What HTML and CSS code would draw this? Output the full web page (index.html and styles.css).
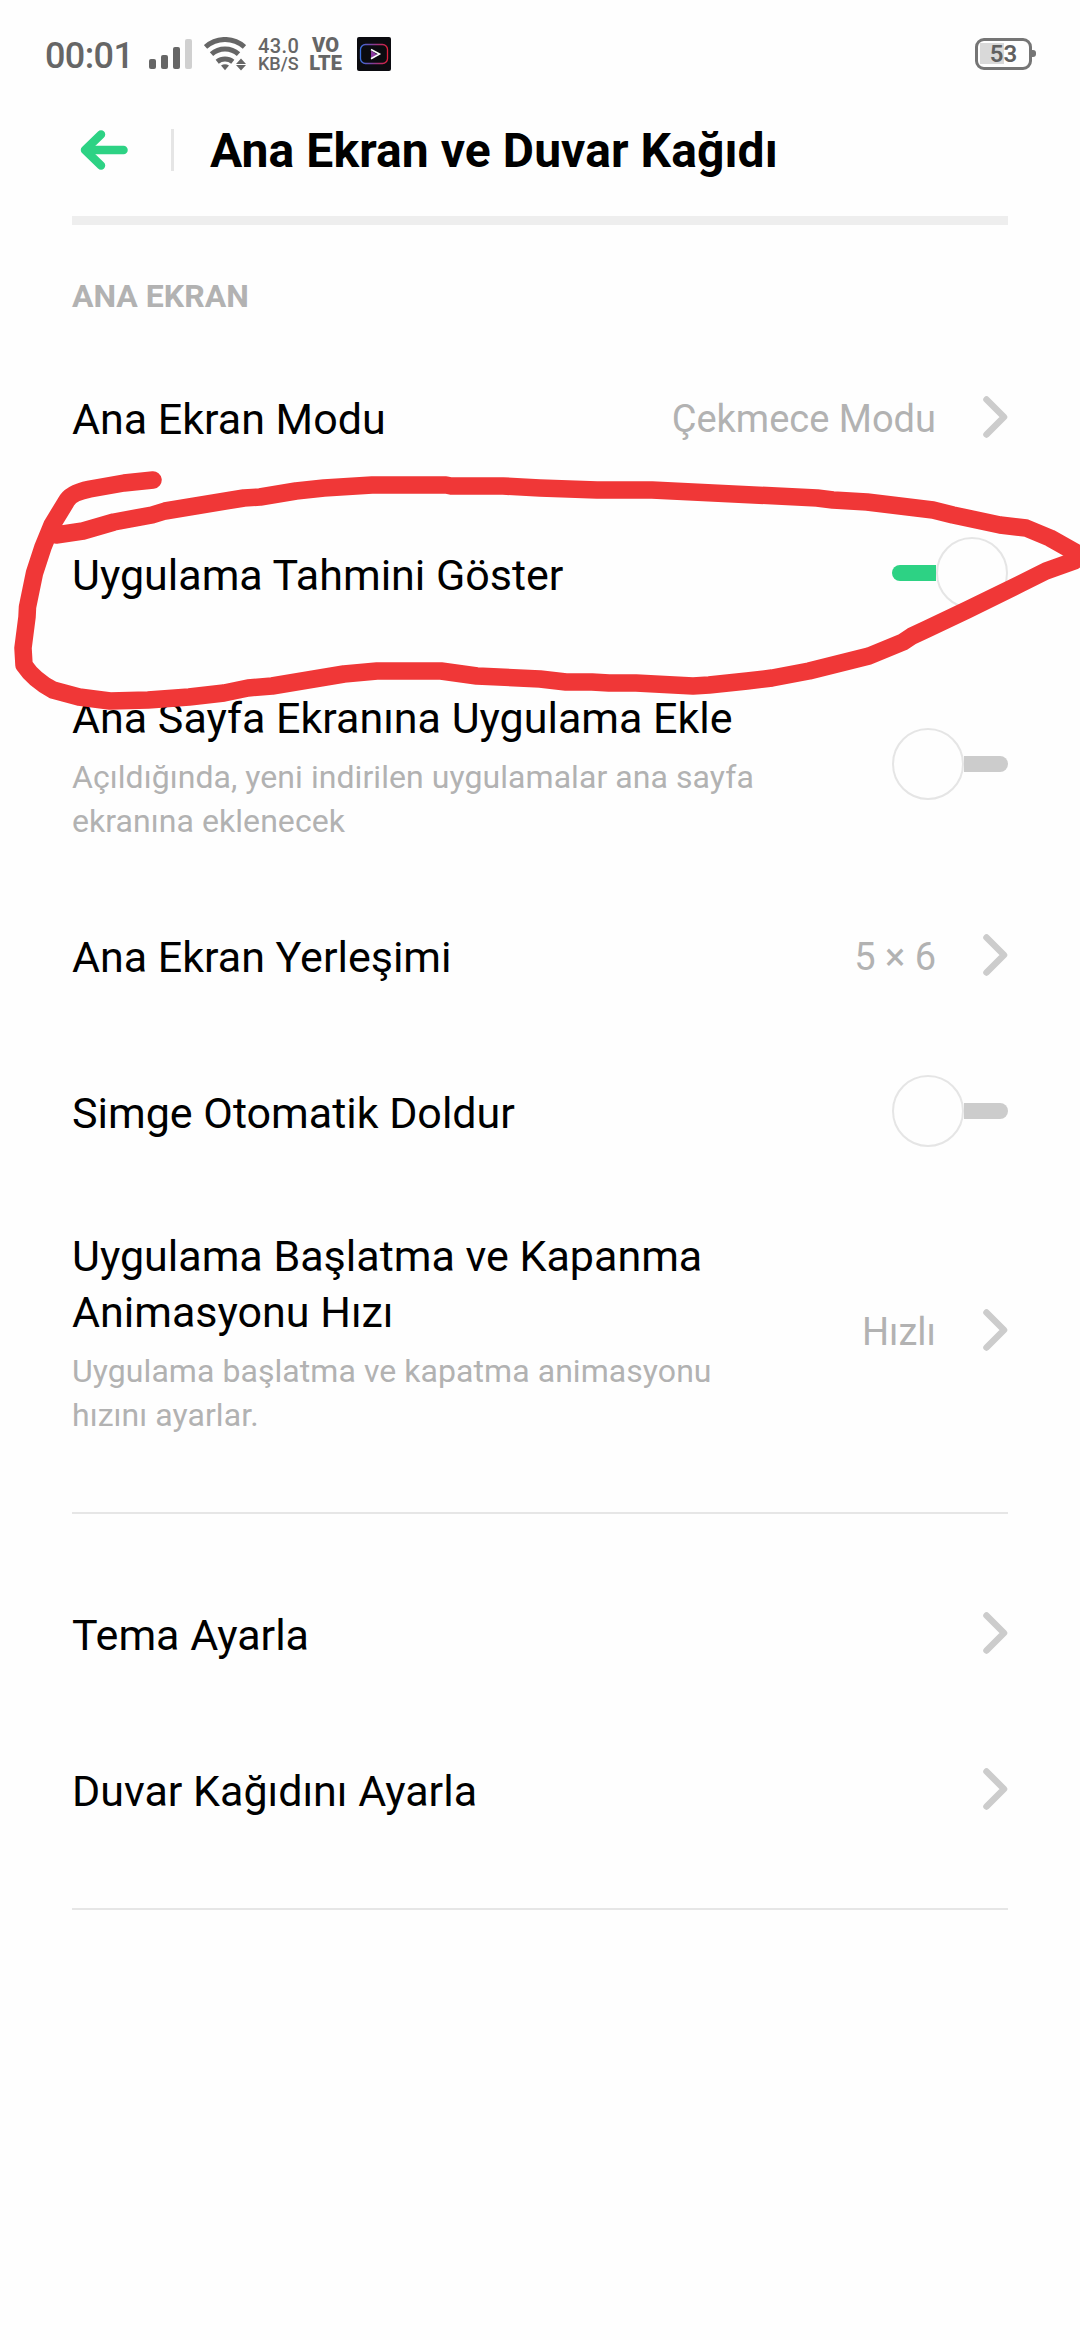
FILE: index.html
```html
<!DOCTYPE html>
<html lang="tr">
<head>
<meta charset="utf-8">
<title>Ana Ekran ve Duvar Kağıdı</title>
<link rel="stylesheet" href="styles.css">
</head>
<body>
<div class="screen">
  <div class="status">
    <span class="clock">00:01</span>
    <svg class="signal" width="43" height="30" viewBox="0 0 43 30"><g fill="#666"><rect x="0" y="20" width="7" height="10" rx="2"/><rect x="12" y="16" width="7" height="14" rx="2"/><rect x="24" y="8" width="7" height="22" rx="2"/></g><rect x="36" y="0" width="7" height="30" rx="2" fill="#d0d0d0"/></svg>
    <svg class="wifi" width="42" height="34" viewBox="0 0 42 34"><g fill="none" stroke="#666" stroke-width="5"><path d="M1.500 10a29 29 0 0 1 39 0"/><path d="M7.500 17.200a20 20 0 0 1 27 0"/><path d="M13.200 24.800a12.500 12.500 0 0 1 15.600 0"/></g><path fill="#666" d="M17 28.500q4-2.400 8 0l-4 4.800zM37 21.500l5 5.500h-10zM37 33.500l5-5.500h-10z"/></svg>
    <span class="speed"><span class="rate">43.0</span><span class="unit">KB/S</span></span>
    <span class="volte"><span>VO</span><span>LTE</span></span>
    <svg class="app" width="34" height="34" viewBox="0 0 34 34"><defs><linearGradient id="ring"><stop offset="0" stop-color="#3a6fe0"/><stop offset=".5" stop-color="#8a3a90"/><stop offset="1" stop-color="#e0203c"/></linearGradient></defs><rect width="34" height="34" rx="2" fill="#0b0b10"/><rect x="3.500" y="7.500" width="27" height="19" rx="5" fill="none" stroke="url(#ring)" stroke-width="1.300"/><path d="M14 13.500v8l6-4z" fill="#8a3aa0"/><path d="M14 12.500l8.500 4.500-8.500 4.800" fill="none" stroke="#fff" stroke-width="1.600"/></svg>
    <div class="battery"><span>53</span></div>
  </div>
  <header class="header">
    <svg width="48" height="40" viewBox="0 0 48 40"><g fill="none" stroke="#2dd284" stroke-width="8.500" stroke-linecap="round" stroke-linejoin="round"><path d="M21 4.500L5 20l16 15.500"/><path d="M7 20h36.500"/></g></svg>
    <i class="bar"></i>
    <h1>Ana Ekran ve Duvar Kağıdı</h1>
  </header>
  <main>
    <h2>ANA EKRAN</h2>
    <section>
      <div class="row"><div class="label">Ana Ekran Modu</div><span class="value">Çekmece Modu</span><svg class="chev" viewBox="0 0 25 42"><path d="M3.500 3.500L21 21 3.500 38.500"/></svg></div>
      <div class="row"><div class="label">Uygulama Tahmini Göster</div><div class="toggle on"></div></div>
      <div class="row tall"><div class="label">Ana Sayfa Ekranına Uygulama Ekle<p>Açıldığında, yeni indirilen uygulamalar ana sayfa<br>ekranına eklenecek</p></div><div class="toggle"></div></div>
      <div class="row"><div class="label">Ana Ekran Yerleşimi</div><span class="value">5 × 6</span><svg class="chev" viewBox="0 0 25 42"><path d="M3.500 3.500L21 21 3.500 38.500"/></svg></div>
      <div class="row"><div class="label">Simge Otomatik Doldur</div><div class="toggle"></div></div>
      <div class="row tall"><div class="label">Uygulama Başlatma ve Kapanma<br>Animasyonu Hızı<p>Uygulama başlatma ve kapatma animasyonu<br>hızını ayarlar.</p></div><span class="value">Hızlı</span><svg class="chev" viewBox="0 0 25 42"><path d="M3.500 3.500L21 21 3.500 38.500"/></svg></div>
    </section>
    <section>
      <div class="row"><div class="label">Tema Ayarla</div><svg class="chev" viewBox="0 0 25 42"><path d="M3.500 3.500L21 21 3.500 38.500"/></svg></div>
      <div class="row"><div class="label">Duvar Kağıdını Ayarla</div><svg class="chev" viewBox="0 0 25 42"><path d="M3.500 3.500L21 21 3.500 38.500"/></svg></div>
    </section>
  </main>
  <svg class="marker" viewBox="0 460 1080 260"><path d="M153 480L124 483L90 489Q70 493 66 502L52 525L43 547L34.500 573L27.500 607L27 617L23 648L24 665Q34 680 53 690L79 697L110 701L148 700L189 697L224 693L248 688L272 686L344 674L377 671L441 671L477 676L540 679L566 682L592 682L609 683L636 683L693 686L709 685L747 681L772 678L809 671L869 656L903 642L912 636L927 629L967 610L1020 584L1046 571L1074 561L1082 556L1050 538L1026 528L1000 525L953 515L933 510L867 502L833 500L817 498L652 490L597 490L540 488L503 486L451 486L446 485L372 485L324 488L296 491L260 497L244 498L165 511L152 515L114 522L83 531L56 535"/></svg>
</div>
</body>
</html>
```
FILE: styles.css
```css
*, ::before, ::after { box-sizing: border-box; }
body { margin: 0; background: #fefefe; font-family: Roboto, sans-serif; color: #000; }
.screen { position: relative; width: 1080px; height: 2340px; overflow: hidden; }
svg { display: block; flex: none; }

.status { height: 108px; display: flex; align-items: center; padding: 0 45px; color: #666; }
.clock { font-size: 36px; font-weight: 500; letter-spacing: -0.6px; width: 104px; line-height: 42px; padding-top: 3px; }
.signal { margin-right: 12px; }
.wifi { margin-right: 12px; }
.speed { display: flex; flex-direction: column; width: 51px; font-weight: 500; }
.rate { font-size: 20px; line-height: 18px; letter-spacing: 0.4px; }
.unit { font-size: 18px; line-height: 17px; }
.volte { display: flex; flex-direction: column; align-items: center; width: 33px; margin-right: 15px; font-size: 20px; line-height: 18px; font-weight: 900; }
.battery { position: relative; margin-left: auto; margin-right: 3px; width: 57px; height: 32px; border: 3.5px solid #757575; border-radius: 9px; display: flex; align-items: center; justify-content: center; font-size: 24px; line-height: 24px; font-weight: 600; color: #606060; background: linear-gradient(#d9d9d9, #d9d9d9) 2px 2px / 24px 21px no-repeat; }
.battery::after { content: ""; position: absolute; right: -7px; top: 9px; width: 4px; height: 7px; border-radius: 0 3px 3px 0; background: #757575; }

.header { margin: 0 72px; height: 117px; border-bottom: 9px solid #eee; display: flex; align-items: center; padding: 0 0 24px 8px; }
.bar { width: 3px; height: 42px; margin: 0 36px 0 43px; background: #e5e5e5; }
h1 { margin: 0; padding-top: 2px; font-size: 48px; line-height: 56px; font-weight: 700; letter-spacing: 0.08px; white-space: nowrap; }

main { padding: 0 72px; }
h2 { margin: 0; height: 114px; padding-top: 52px; font-size: 32px; line-height: 38px; font-weight: 700; color: #b2b2b2; }
section { padding-bottom: 41px; border-bottom: 2px solid #e6e6e6; }
section + section { padding-top: 41px; }
.row { display: flex; align-items: center; height: 156px; }
.row.tall { height: auto; }
.label { flex: 1; padding-top: 4px; font-size: 43px; line-height: 56px; white-space: nowrap; }
.tall .label { padding: 39px 0 34px; }
p { margin: 9px 0 0; font-size: 32px; line-height: 44px; letter-spacing: 0.06px; color: #b2b2b2; }
.value { margin-right: 47px; padding-top: 3px; font-size: 38px; line-height: 44px; color: #b2b2b2; }
.chev { width: 25px; height: 42px; fill: none; stroke: #ccc; stroke-width: 6.5; stroke-linecap: round; stroke-linejoin: round; }
.toggle { display: flex; align-items: center; width: 116px; height: 72px; }
.toggle::before { content: ""; flex: none; width: 72px; height: 72px; border: 2px solid #e5e5e5; border-radius: 50%; background: #fefefe; }
.toggle::after { content: ""; width: 44px; height: 16px; border-radius: 0 8px 8px 0; background: #ccc; }
.toggle.on { flex-direction: row-reverse; }
.toggle.on::after { border-radius: 8px 0 0 8px; background: #2dd284; }

.marker { position: absolute; left: 0; top: 460px; width: 1080px; height: 260px; fill: none; stroke: #f03737; stroke-width: 17.5; stroke-linecap: round; stroke-linejoin: round; }
```
